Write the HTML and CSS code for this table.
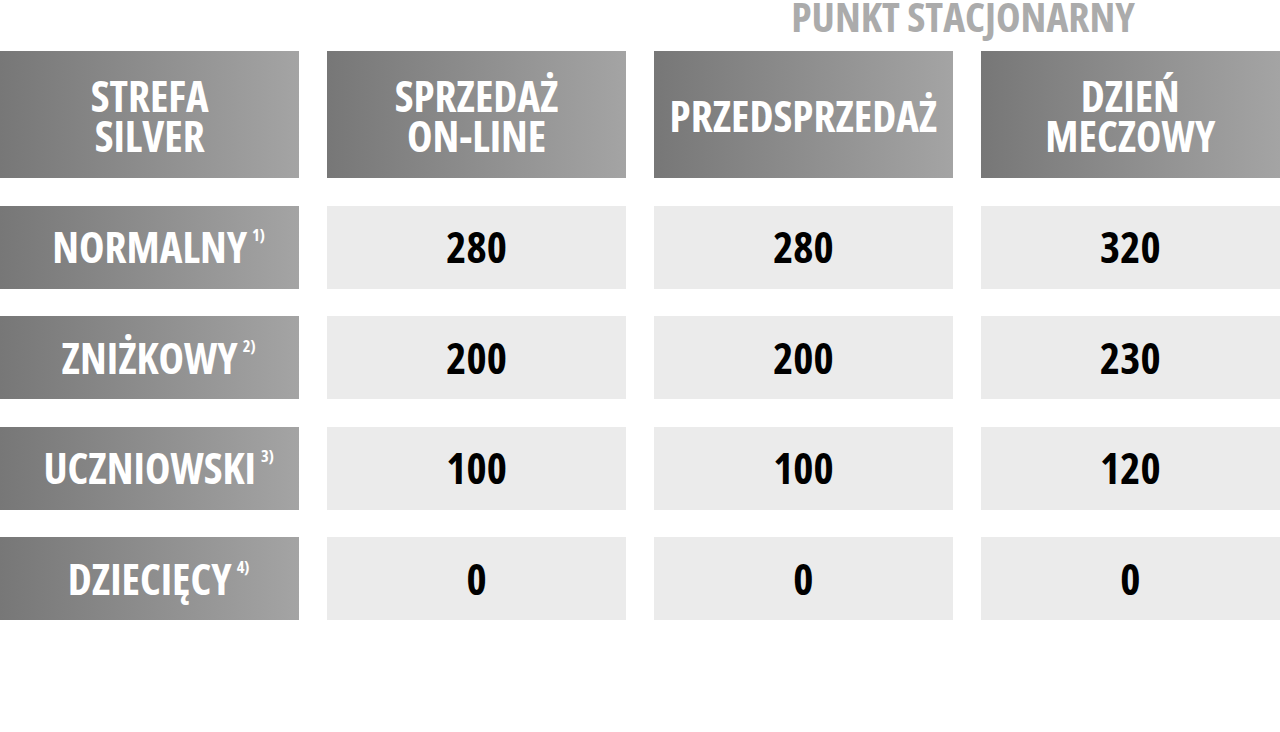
FILE: index.html
```html
<!DOCTYPE html>
<html lang="pl">
<head>
<meta charset="utf-8">
<title>Cennik – Strefa Silver</title>
<link rel="stylesheet" href="styles.css">
</head>
<body>
<div class="page">
  <div class="title-row">
    <div class="title">PUNKT STACJONARNY</div>
  </div>
  <div class="table">
    <div class="cell head"><span class="lines">STREFA<br>SILVER</span></div>
    <div class="cell head"><span class="lines">SPRZEDAŻ<br>ON-LINE</span></div>
    <div class="cell head"><span class="lines">PRZEDSPRZEDAŻ</span></div>
    <div class="cell head"><span class="lines">DZIEŃ<br>MECZOWY</span></div>

    <div class="cell label"><span class="name">NORMALNY<sup>1)</sup></span></div>
    <div class="cell val">280</div>
    <div class="cell val">280</div>
    <div class="cell val">320</div>

    <div class="cell label"><span class="name">ZNIŻKOWY<sup>2)</sup></span></div>
    <div class="cell val">200</div>
    <div class="cell val">200</div>
    <div class="cell val">230</div>

    <div class="cell label"><span class="name">UCZNIOWSKI<sup>3)</sup></span></div>
    <div class="cell val">100</div>
    <div class="cell val">100</div>
    <div class="cell val">120</div>

    <div class="cell label"><span class="name">DZIECIĘCY<sup>4)</sup></span></div>
    <div class="cell val">0</div>
    <div class="cell val">0</div>
    <div class="cell val">0</div>
  </div>
</div>
</body>
</html>
```

FILE: styles.css
```css
html, body {
  margin: 0;
  padding: 0;
  background: #ffffff;
}
body {
  font-family: "Open Sans", "DejaVu Sans Condensed", sans-serif;
  font-stretch: 75%;
  font-weight: 700;
}
.page {
  width: 1280px;
  height: 732px;
  overflow: hidden;
}
.title-row {
  display: flex;
  justify-content: flex-end;
  height: 51px;
  padding-right: 145px;
}
.title {
  color: #ababab;
  font-size: 41.5px;
  line-height: 36px;
  margin-top: -2px;
}
.table {
  display: grid;
  grid-template-columns: repeat(4, 1fr);
  grid-template-rows: 127px repeat(4, 83px);
  column-gap: 27.5px;
  row-gap: 27.5px;
}
.cell {
  display: flex;
  align-items: center;
  justify-content: center;
  text-align: center;
  font-size: 43px;
  line-height: 40px;
}
.head, .label {
  color: #ffffff;
  background: linear-gradient(to right, #777777, #a4a4a4);
}
.head {
  padding-top: 2px;
}
.lines {
  display: block;
}
.name {
  position: relative;
}
.name sup {
  position: absolute;
  left: 100%;
  top: 0;
  margin-left: 5px;
  font-size: 16.5px;
  line-height: 1;
}
.val {
  background: #ebebeb;
  color: #000000;
}
```
